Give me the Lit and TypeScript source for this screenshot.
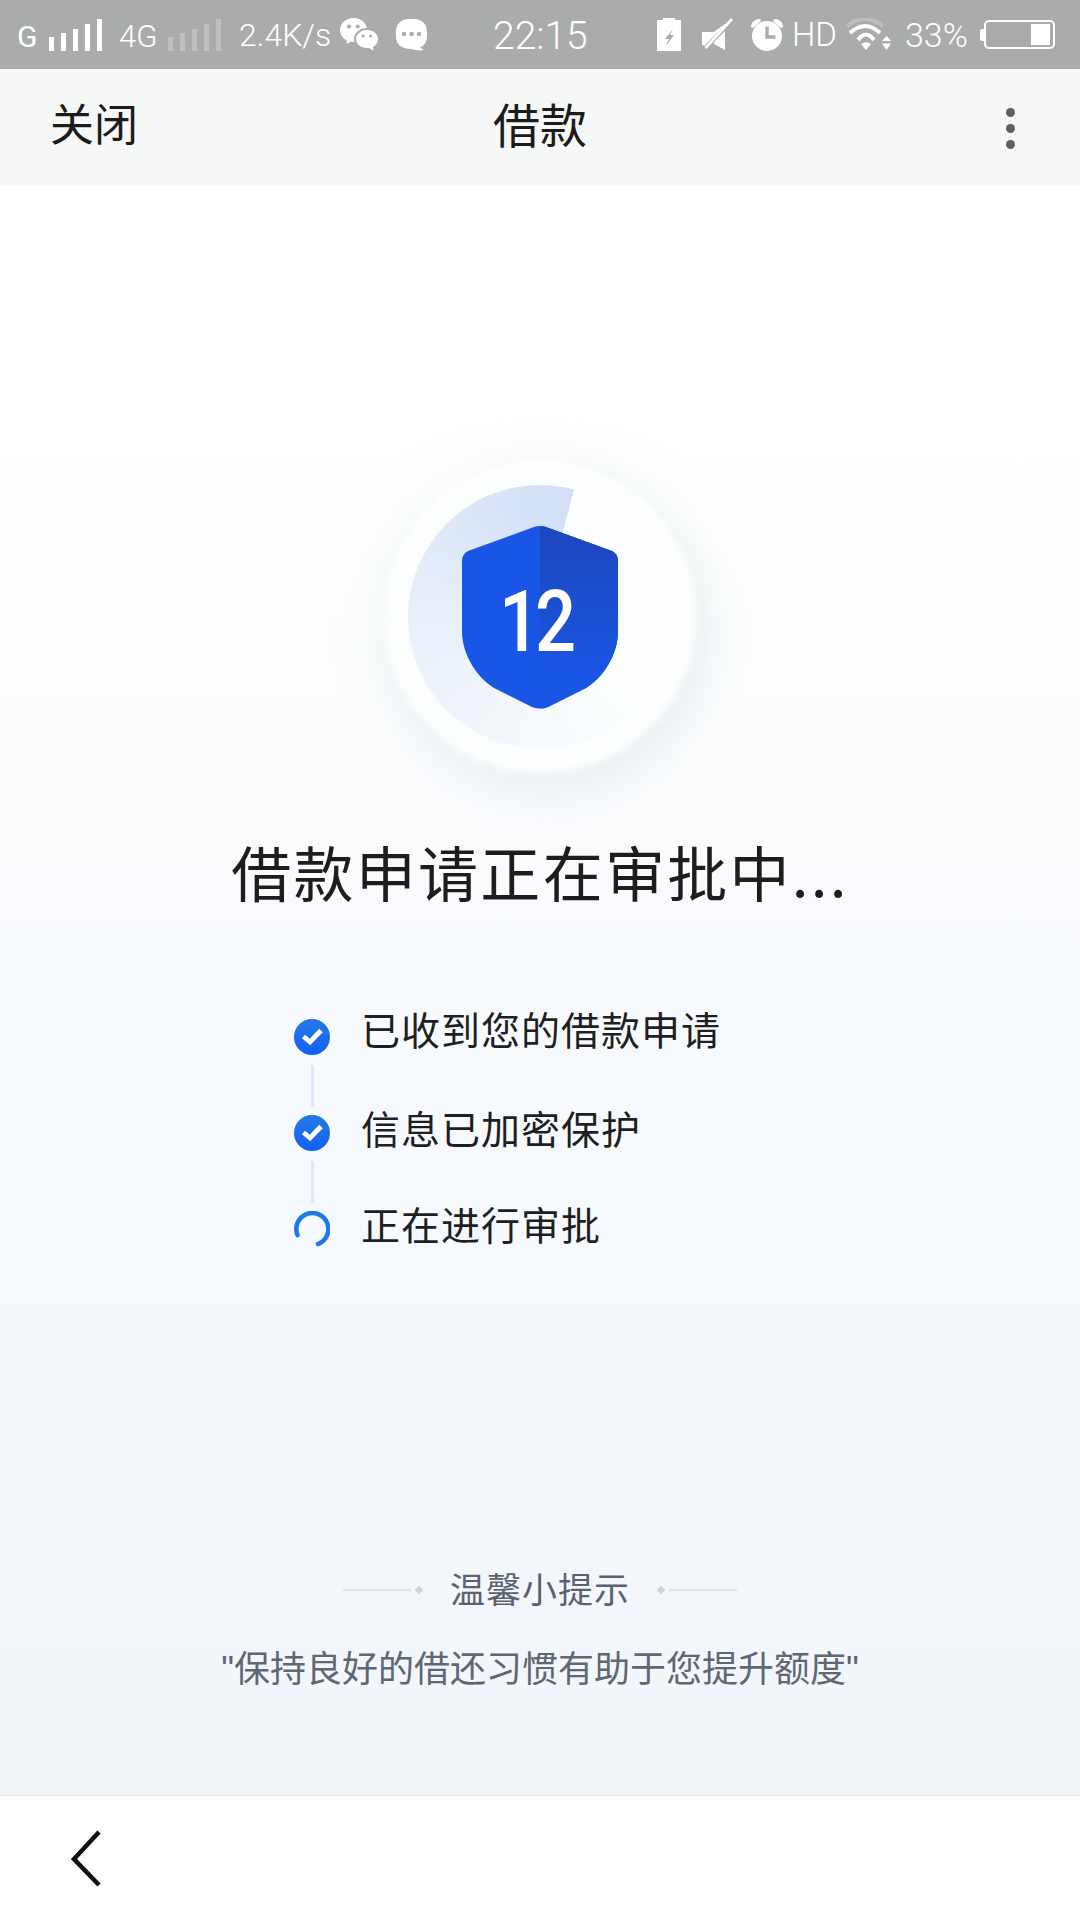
import { html, css, LitElement, svg } from "lit";
import { customElement } from "lit/decorators.js";

const steps = [
  { text: "已收到您的借款申请", done: true },
  { text: "信息已加密保护", done: true },
  { text: "正在进行审批", done: false },
];

const barHeights = [14, 18, 22, 27, 32];

const bars = (cls: string) => html`
  <div class="bars ${cls}">
    ${barHeights.map((h) => html`<i style="height:${h}px"></i>`)}
  </div>
`;

const checkIcon = svg`
  <svg class="step-icon" width="36" height="36" viewBox="0 0 36 36">
    <defs>
      <linearGradient id="chk" x1="0" y1="0" x2="0" y2="1">
        <stop offset="0" stop-color="#2a78e6" />
        <stop offset="1" stop-color="#0f62f0" />
      </linearGradient>
    </defs>
    <circle cx="18" cy="18" r="18" fill="url(#chk)" />
    <path d="M9.500 17.500 L16 23 L27 11.500" fill="none" stroke="#fff" stroke-width="4.800" />
  </svg>
`;

const spinIcon = svg`
  <svg class="step-icon" width="36" height="36" viewBox="0 0 36 36">
    <path d="M3.500 24 A16 16 0 1 1 24 33" fill="none" stroke="#1f78ea" stroke-width="4.600" stroke-linecap="round" />
  </svg>
`;

@customElement("app-root")
export class AppRoot extends LitElement {
  static styles = css`
    :host {
      display: block;
      width: 1080px;
      height: 1920px;
      font-family: "Noto Sans CJK SC", "Noto Sans", sans-serif;
      overflow: hidden;
    }
    .page {
      display: flex;
      flex-direction: column;
      height: 1920px;
    }

    /* status bar */
    .status {
      display: flex;
      align-items: center;
      flex: none;
      height: 69px;
      padding-left: 17px;
      background: #a9acaa;
      color: #fff;
      font-family: Roboto, sans-serif;
      font-weight: 300;
      font-size: 32px;
      white-space: nowrap;
    }
    .status svg {
      display: block;
      flex: none;
    }
    .s-g {
      width: 32px;
      font-weight: 400;
      font-size: 30px;
      padding-top: 3px;
    }
    .bars {
      display: flex;
      align-items: flex-end;
      gap: 7px;
      height: 32px;
    }
    .bars i {
      display: block;
      width: 5px;
      background: #fff;
    }
    .bars.off i {
      background: #bfc1c0;
    }
    .s-bars1 {
      margin-right: 17px;
    }
    .s-4g {
      width: 49px;
      font-size: 31px;
      padding-top: 3px;
    }
    .s-bars2 {
      margin-right: 18px;
    }
    .s-speed {
      width: 101px;
      font-size: 32px;
    }
    .s-wx {
      margin-right: 18px;
    }
    .s-msg {
      margin-right: 66px;
    }
    .s-time {
      width: 164px;
      font-size: 39px;
      padding-top: 2px;
    }
    .s-charge {
      margin-right: 21px;
    }
    .s-mute {
      margin-right: 17px;
    }
    .s-alarm {
      margin-right: 8px;
    }
    .s-hd {
      width: 54px;
      font-size: 33px;
    }
    .s-wifi {
      margin-right: 13px;
    }
    .s-pct {
      width: 75px;
      font-size: 34px;
    }
    .nub {
      width: 4px;
      height: 12px;
      background: #fff;
      border-radius: 2px 0 0 2px;
    }
    .battery {
      display: flex;
      justify-content: flex-end;
      box-sizing: border-box;
      width: 71px;
      height: 29px;
      padding: 2px 3px;
      border: 2px solid #fff;
      border-radius: 5px;
    }
    .battery i {
      display: block;
      width: 19px;
      background: #fff;
    }

    /* title bar */
    .nav {
      display: grid;
      grid-template-columns: 1fr auto 1fr;
      align-items: center;
      flex: none;
      height: 116px;
      padding: 0 50px;
      background: #f6f8f7;
      color: #1b1b1b;
    }
    .nav-close {
      margin-bottom: 10px;
      font-size: 44px;
      line-height: 1;
    }
    .nav-title {
      margin-bottom: 10px;
      font-size: 47px;
      line-height: 1;
    }
    .nav-more {
      display: flex;
      flex-direction: column;
      gap: 7px;
      justify-self: end;
      margin-right: 15px;
      padding-top: 3px;
    }
    .nav-more i {
      display: block;
      width: 9px;
      height: 9px;
      border-radius: 50%;
      background: #5d5f60;
    }

    /* main */
    .main {
      flex: 1;
      display: flex;
      flex-direction: column;
      align-items: center;
      background: linear-gradient(#ffffff 0%, #fefffe 14%, #f9fbfd 40%, #f6f9fd 60%, #f2f6fb 100%);
    }
    .hero {
      display: grid;
      place-items: center;
      width: 400px;
      height: 400px;
      margin-top: 232px;
    }
    .hero > * {
      grid-area: 1 / 1;
      z-index: 1;
    }
    .hero > .halo {
      z-index: 0;
    }
    .halo {
      width: 312px;
      height: 312px;
      border-radius: 50%;
      background: #fcfefe;
      box-shadow: 10px 14px 42px rgba(198, 210, 218, 0.24), 0 0 60px rgba(228, 234, 240, 0.3);
      filter: blur(3px);
    }
    .sector {
      width: 264px;
      height: 264px;
      border-radius: 50%;
      background: conic-gradient(
        from 15deg,
        #fcfefe 0deg,
        #fcfefe 110deg,
        #f6fafd 165deg,
        #e9f0fa 255deg,
        #d3e0f7 345deg,
        #d3e0f7 360deg
      );
    }
    .shield {
      display: block;
      margin-top: 2px;
    }
    .shield text {
      font-family: Roboto, sans-serif;
      font-weight: 500;
      font-size: 85px;
      fill: #fff;
    }
    .title {
      margin-top: 18px;
      font-size: 60px;
      line-height: 72px;
      letter-spacing: 2.300px;
      color: #1d1d1d;
      white-space: nowrap;
    }
    .steps {
      display: flex;
      flex-direction: column;
      align-self: flex-start;
      margin: 112px 0 0 294px;
    }
    .step {
      display: flex;
      align-items: center;
      gap: 31px;
      height: 36px;
    }
    .step-icon {
      display: block;
      flex: none;
    }
    .step-text {
      margin-top: -12px;
      font-size: 39px;
      line-height: 48px;
      letter-spacing: 1px;
      color: #1f1f1f;
      white-space: nowrap;
    }
    .step:first-child .step-text {
      margin-top: -18px;
    }
    .link {
      width: 3px;
      height: 42px;
      margin: 10px 0 8px 17px;
      background: #dfe6f5;
    }
    .tips {
      display: flex;
      align-items: center;
      margin-top: 317px;
      color: #59626e;
    }
    .tips-title {
      margin: 0 28px 3px;
      font-size: 35px;
      line-height: 48px;
      letter-spacing: 1px;
    }
    .tips-line {
      width: 68px;
      height: 2px;
      background: #dfe3e6;
    }
    .tips-dot {
      width: 6px;
      height: 6px;
      margin: 0 0 0 5px;
      background: #cfd3d6;
      transform: rotate(45deg);
    }
    .tips-dot.right {
      margin: 0 5px 0 0;
    }
    .quote {
      margin-top: 31px;
      font-family: "Liberation Sans", "Noto Sans CJK SC", sans-serif;
      font-size: 36px;
      line-height: 48px;
      color: #5e6772;
      white-space: nowrap;
    }

    /* bottom bar */
    .bottom {
      flex: none;
      height: 125px;
      border-top: 1px solid #dfe5e8;
      background: #fff;
      padding: 34px 0 0 71px;
      box-sizing: border-box;
    }
    .bottom svg {
      display: block;
    }
  `;

  render() {
    return html`
      <div class="page">
        <div class="status">
          <div class="s-g">G</div>
          ${bars("s-bars1")}
          <div class="s-4g">4G</div>
          ${bars("off s-bars2")}
          <div class="s-speed">2.4K/s</div>
          <svg class="s-wx" width="38" height="33" viewBox="0 0 38 33">
            <path d="M13.500 0 C21 0 27 5.400 27 12 C27 18.600 21 24 13.500 24 C12.500 24 11.500 23.900 10.500 23.700 L7 26 L6.500 22.300 C2.500 20.200 0 16.400 0 12 C0 5.400 6 0 13.500 0Z" fill="#fff" />
            <ellipse cx="27" cy="21" rx="13" ry="11" fill="#a9acaa" />
            <path d="M27 12 C33 12 38 16 38 21 C38 24.500 36 27.300 33 28.800 L33.500 32.500 L29 30 C28.300 30 27.600 30 27 30 C21 30 16 26 16 21 C16 16 21 12 27 12Z" fill="#fff" />
            <circle cx="9" cy="8.500" r="2.100" fill="#a9acaa" />
            <circle cx="17.700" cy="8.500" r="2.100" fill="#a9acaa" />
            <circle cx="23" cy="18" r="1.600" fill="#a9acaa" />
            <circle cx="30.700" cy="18" r="1.600" fill="#a9acaa" />
          </svg>
          <svg class="s-msg" width="31" height="32" viewBox="0 0 31 32">
            <path d="M13 0 H18 C26 0 31 5 31 13 V17 C31 23 28 27 24 28.500 L28 31 C24 32 18 31 15 30 C5 30 0 25 0 17 V13 C0 5 5 0 13 0Z" fill="#fff" />
            <circle cx="8" cy="15" r="2.200" fill="#a9acaa" />
            <circle cx="15.600" cy="15" r="2.200" fill="#a9acaa" />
            <circle cx="23" cy="15" r="2.200" fill="#a9acaa" />
          </svg>
          <div class="s-time">22:15</div>
          <svg class="s-charge" width="24" height="33" viewBox="0 0 24 33">
            <path d="M0 2 H6 V0 H18 V2 H24 V33 H0Z" fill="#fff" />
            <path d="M16 11 L8 21 H12 L9 28 L17 17 H13Z" fill="#a9acaa" />
          </svg>
          <svg class="s-mute" width="31" height="33" viewBox="0 0 31 33">
            <path d="M0 14 H12 L23 6 V7 L2 28 L0 27Z" fill="#fff" />
            <path d="M12 24 L23 13 V32 L12 26Z" fill="#fff" />
            <path d="M3.500 30 L30 1" stroke="#fff" stroke-width="2.600" />
          </svg>
          <svg class="s-alarm" width="34" height="33" viewBox="0 0 34 33">
            <path d="M1 9 C1 4 5 1 10 1 L11 3 L3 10 Z M33 9 C33 4 29 1 24 1 L23 3 L31 10 Z" fill="#fff" />
            <circle cx="17" cy="18" r="15" fill="#fff" />
            <path d="M17 8.500 V19 H25.500" fill="none" stroke="#a9acaa" stroke-width="3.400" />
          </svg>
          <div class="s-hd">HD</div>
          <svg class="s-wifi" width="46" height="33" viewBox="0 0 46 33">
            <path d="M1 8 Q19 -6 37 8" fill="none" stroke="#bcbfbd" stroke-width="4" />
            <path d="M4 15 Q19 1 34 15" fill="none" stroke="#fff" stroke-width="4" />
            <path d="M12 22 Q20 11 28 22" fill="none" stroke="#fff" stroke-width="4" />
            <path d="M15 26 Q20 22.500 25 26 L20 32Z" fill="#fff" />
            <path d="M40.500 18 L45 23 H36Z M36 25.500 H45 L40.500 32Z" fill="#fff" />
          </svg>
          <div class="s-pct">33%</div>
          <div class="nub"></div>
          <div class="battery"><i></i></div>
        </div>

        <div class="nav">
          <div class="nav-close">关闭</div>
          <div class="nav-title">借款</div>
          <div class="nav-more"><i></i><i></i><i></i></div>
        </div>

        <div class="main">
          <div class="hero">
            <div class="halo"></div>
            <div class="sector"></div>
            <svg class="shield" width="156" height="184" viewBox="0 0 156 184">
              <defs>
                <linearGradient id="shade" x1="0" y1="0" x2="0" y2="1">
                  <stop offset="0" stop-color="#1c46bc" />
                  <stop offset="0.6" stop-color="#1a52d8" />
                  <stop offset="0.85" stop-color="#1a56e6" />
                </linearGradient>
              </defs>
              <path d="M72 1 Q78 -1 84 1 L150 25 Q156 28 156 35 L156 105 C156 130 140 152 124 162 L86 181 Q78 184 70 181 L32 162 C16 152 0 130 0 105 L0 35 Q0 28 6 25 Z" fill="#1a56e6" />
              <path d="M78 0 Q81 0 84 1 L150 25 Q156 28 156 35 L156 105 C156 130 140 152 124 162 L86 181 Q82 182.500 78 182.500 Z" fill="url(#shade)" />
              <text transform="translate(73 125) scale(0.85 1)" text-anchor="middle" letter-spacing="-6">12</text>
            </svg>
          </div>

          <div class="title">借款申请正在审批中...</div>

          <div class="steps">
            ${steps.map(
              (s, i) => html`
                ${i > 0 ? html`<div class="link"></div>` : ""}
                <div class="step">
                  ${s.done ? checkIcon : spinIcon}
                  <div class="step-text">${s.text}</div>
                </div>
              `
            )}
          </div>

          <div class="tips">
            <div class="tips-line"></div>
            <div class="tips-dot"></div>
            <div class="tips-title">温馨小提示</div>
            <div class="tips-dot right"></div>
            <div class="tips-line"></div>
          </div>
          <div class="quote">"保持良好的借还习惯有助于您提升额度"</div>
        </div>

        <div class="bottom">
          <svg width="34" height="58" viewBox="0 0 34 58">
            <path d="M28 2 L3 29 L28 55" fill="none" stroke="#111" stroke-width="4.500" />
          </svg>
        </div>
      </div>
    `;
  }
}
